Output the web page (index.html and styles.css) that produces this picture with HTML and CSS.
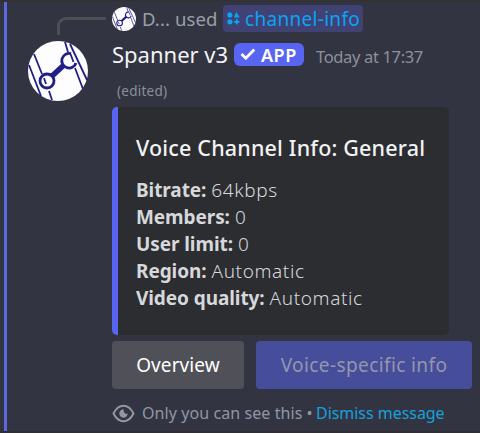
FILE: index.html
```html
<!DOCTYPE html>
<html lang="en">
<head>
<meta charset="utf-8">
<title>Spanner v3</title>
<link rel="stylesheet" href="styles.css">
</head>
<body>
<svg width="0" height="0" class="defs" aria-hidden="true">
  <symbol id="spanner" viewBox="0 0 60 60">
    <circle cx="30" cy="30" r="30" fill="#fdfdff"/>
    <g fill="none" stroke="#201f87" stroke-width="1.8">
      <path d="M1 24 13 55M6 13 14 33M21 50l3 9M37 1l3 10M47 27l8 21M42 3l17 36"/>
      <path d="M24 35 36 24" stroke-width="5.5"/>
      <circle cx="19" cy="40" r="7" stroke-width="2.8"/>
      <path d="M43 12.700A7.300 7.300 0 1 0 48 22" stroke-width="2.800"/>
      <path d="m16 37 2 6M42.500 13l3 8"/>
    </g>
  </symbol>
</svg>
<article class="message">
  <aside class="side">
    <div class="spine"></div>
    <svg class="avatar"><use href="#spanner"/></svg>
  </aside>
  <main class="body">
    <div class="reply">
      <svg class="mini"><use href="#spanner"/></svg>
      <span class="used">D... used</span>
      <span class="command">
        <svg width="13" height="13" viewBox="0 0 13 13" fill="#0ca4f4"><path d="M1 .5h3.200L5.600 3.200 4.500 5.600H1.200L.3 3.500zM9.300 0 12.800 5.600H6.900z"/><circle cx="2.900" cy="9.800" r="2.600"/><path d="M9.800 7v5.600M7 9.800h5.600" stroke="#0ca4f4" stroke-width="1.800"/></svg>
        <span class="command-name">channel-info</span>
      </span>
    </div>
    <header class="author">
      <span class="name">Spanner v3</span>
      <span class="badge"><svg width="16" height="12" viewBox="0 0 16 12"><path d="m1.500 6 4.300 4.200L14.300 1.500" fill="none" stroke="#fff" stroke-width="2.800"/></svg><span>APP</span></span>
      <time class="time">Today at 17:37</time>
    </header>
    <div class="edited">(edited)</div>
    <section class="embed">
      <h1 class="title">Voice Channel Info: General</h1>
      <p class="row"><b>Bitrate:</b><span>64kbps</span></p>
      <p class="row"><b>Members:</b><span>0</span></p>
      <p class="row"><b>User limit:</b><span>0</span></p>
      <p class="row"><b>Region:</b><span>Automatic</span></p>
      <p class="row"><b>Video quality:</b><span>Automatic</span></p>
    </section>
    <div class="buttons">
      <button class="btn overview">Overview</button>
      <button class="btn voice" disabled>Voice-specific info</button>
    </div>
    <footer class="footer">
      <svg width="23" height="19" viewBox="0 0 23 19"><path d="M1.500 9.500C4 4.500 7.500 1.800 11.500 1.800S19 4.500 21.500 9.500C19 14.500 15.500 17.200 11.500 17.200S4 14.500 1.500 9.500Z" fill="none" stroke="#9196a1" stroke-width="2"/><path d="M11.500 5.300A4.200 4.200 0 1 0 15.700 9.500Q12 11 11.500 5.300Z" fill="#9196a1"/></svg>
      <span class="only">Only you can see this</span><span class="dot">•</span><a class="dismiss">Dismiss message</a>
    </footer>
  </main>
</article>
</body>
</html>
```
FILE: styles.css
```css
* { box-sizing: border-box; }
body { margin: 0; width: 480px; height: 433px; overflow: hidden; background: #323541; font-family: "Noto Sans", sans-serif; }
.defs { display: block; }
svg { flex: none; }
span, b, time, a, h1, button { white-space: nowrap; }
.message { display: flex; height: 433px; border-top: 2px solid #313136; border-bottom: 2px solid #302e33; padding-left: 4px; }
.side { width: 108px; flex: none; border-left: 3px solid #5b69e0; }
.spine { width: 49px; height: 18px; margin: 15px 0 0 50px; border: solid #4d4e56; border-width: 3px 0 0 3px; border-radius: 9px 0 0 0; }
.avatar { display: block; width: 60px; height: 60px; margin: 6px 0 0 21px; }
.body { width: 368px; flex: none; }
.reply { display: flex; align-items: center; height: 33px; }
.mini { width: 24px; height: 24px; }
.used { width: 80px; padding-left: 6px; margin-right: 7px; font-size: 18.500px; letter-spacing: .1px; color: #9b9ea7; }
.command { display: flex; align-items: center; gap: 5px; height: 27px; width: 140px; padding-left: 4px; border-radius: 4px; background: #3f4273; color: #0ca4f4; font-size: 19px; letter-spacing: .3px; }
.author { display: flex; align-items: center; height: 40px; }
.name { width: 122px; margin-top: -2px; font-size: 22px; color: #f2f3f5; font-weight: 450; }
.badge { display: flex; align-items: center; gap: 5px; width: 70px; height: 23px; padding-left: 6px; margin-top: -2px; border-radius: 6px; background: #5865f2; color: #fff; font-size: 18px; font-weight: 600; letter-spacing: .5px; }
.badge span { padding-top: 2px; }
.time { margin: 3px 0 0 12px; font-size: 16.500px; letter-spacing: -.35px; color: #8c909a; }
.edited { height: 32px; padding: 7px 0 0 5px; font-size: 13.500px; line-height: 18px; letter-spacing: .25px; color: #8c909a; }
.embed { width: 337px; height: 228px; padding: 25px 0 0 18px; border-left: 6px solid #5865f2; border-radius: 5px; background: #2c2d31; }
.title { margin: 0 0 13px; font-size: 21.500px; line-height: 32px; font-weight: 500; letter-spacing: .18px; color: #f2f3f5; }
.row { display: flex; gap: 5px; margin: 0; height: 27px; line-height: 27px; font-size: 19px; font-weight: 300; color: #d6d8dc; }
.row b { font-weight: 700; letter-spacing: -.08px; }
.row span { letter-spacing: .6px; }
.buttons { display: flex; gap: 12px; padding-top: 6px; }
.btn { height: 48px; border: 0; border-radius: 4px; padding: 0; font: 450 19px/48px "Noto Sans", sans-serif; }
.overview { width: 132px; background: #505058; color: #fff; letter-spacing: .1px; }
.voice { width: 216px; background: #464e9b; color: #9496ac; letter-spacing: .4px; }
.footer { display: flex; align-items: center; height: 24px; margin-top: 12px; font-size: 16px; color: #9196a1; }
.only { width: 161px; margin-left: 7px; letter-spacing: .08px; }
.dot { width: 13px; text-align: center; }
.dismiss { color: #16a0dc; letter-spacing: -.04px; }
```
